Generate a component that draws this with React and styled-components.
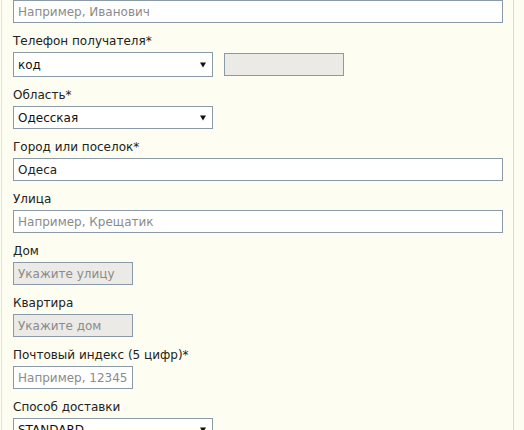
import React from "react"
import styled, { createGlobalStyle } from "styled-components"

const GlobalStyle = createGlobalStyle`
  html, body {
    margin: 0;
    padding: 0;
    background: #fdfdf1;
  }
  body {
    font-family: "DejaVu Sans", Verdana, sans-serif;
    font-size: 12px;
    color: #222;
  }
`

function SelectField({ value, tall }) {
  return (
    <SelectBox $tall={tall}>
      <SelectValue>{value}</SelectValue>
      <svg width="6" height="6" viewBox="0 0 6 6">
        <path d="M0 0.5H6L3 5.5Z" fill="#111" />
      </svg>
    </SelectBox>
  )
}

function App() {
  return (
    <>
      <GlobalStyle />
      <Panel>
        <Field>
          <TextInput placeholder="Например, Иванович" />
        </Field>

        <Field>
          <Label>Телефон получателя*</Label>
          <PhoneRow>
            <SelectField value="код" tall />
            <TextInput disabled $width="120px" />
          </PhoneRow>
        </Field>

        <Field>
          <Label>Область*</Label>
          <SelectField value="Одесская" />
        </Field>

        <Field>
          <Label>Город или поселок*</Label>
          <TextInput defaultValue="Одеса" />
        </Field>

        <Field>
          <Label>Улица</Label>
          <TextInput placeholder="Например, Крещатик" />
        </Field>

        <Field>
          <Label>Дом</Label>
          <TextInput disabled $width="120px" placeholder="Укажите улицу" />
        </Field>

        <Field>
          <Label>Квартира</Label>
          <TextInput disabled $width="120px" placeholder="Укажите дом" />
        </Field>

        <Field>
          <Label>Почтовый индекс (5 цифр)*</Label>
          <TextInput $width="120px" placeholder="Например, 12345" />
        </Field>

        <Field>
          <Label>Способ доставки</Label>
          <SelectField value="STANDARD" />
        </Field>
      </Panel>
    </>
  )
}

export default App

const Panel = styled.div`
  box-sizing: border-box;
  margin-left: 1px;
  width: 513px;
  height: 430px;
  overflow: hidden;
  padding: 0 10px 0 11px;
  border-left: 1px solid #e2e2da;
  border-right: 1px solid #dcdcd4;
`

const Field = styled.div`
  display: flex;
  flex-direction: column;
  align-items: flex-start;
  margin-bottom: 10px;
`

const Label = styled.label`
  display: block;
  height: 16px;
  line-height: 16px;
  margin-bottom: 3px;
  color: #222;
`

const PhoneRow = styled.div`
  display: flex;
  align-items: center;
  gap: 11px;
`

const TextInput = styled.input`
  box-sizing: border-box;
  width: ${(p) => p.$width || "490px"};
  height: 23px;
  margin: 0;
  padding: 0 4px;
  border: 1px solid #8a9aa6;
  border-radius: 0;
  background: ${(p) => (p.disabled ? "#ebeae6" : "#fff")};
  font-family: inherit;
  font-size: 12px;
  color: #222;
  outline: none;

  &::placeholder {
    color: #8b8b8b;
    opacity: 1;
  }
`

const SelectBox = styled.div`
  box-sizing: border-box;
  width: 200px;
  height: ${(p) => (p.$tall ? "25px" : "23px")};
  flex-shrink: 0;
  display: flex;
  align-items: center;
  justify-content: space-between;
  padding: 0 6px 0 4px;
  border: 1px solid #8a9aa6;
  background: #fff;
  color: #111;
`

const SelectValue = styled.span`
  white-space: nowrap;
`
